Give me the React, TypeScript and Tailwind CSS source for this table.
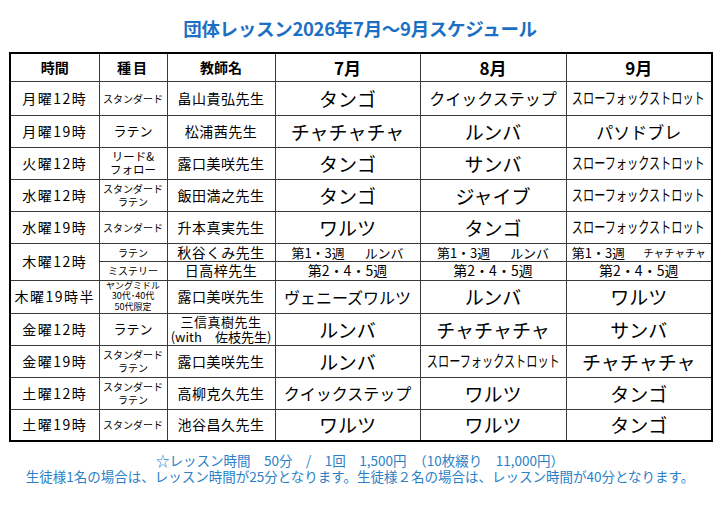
import React from "react";

const td = "border border-[#3a3a3a] p-0 text-center align-middle";

function C({ children, className = "" }: { children: React.ReactNode; className?: string }) {
  return <div className={`flex items-center justify-center whitespace-nowrap ${className}`}>{children}</div>;
}

function Big({ t }: { t: string }) {
  return <C className="text-[19px] leading-none">{t}</C>;
}
function Mid({ t }: { t: string }) {
  return <C className="text-[16px] leading-none">{t}</C>;
}
function Slow() {
  return (
    <C>
      <span className="inline-block shrink-0 text-[15.5px] leading-none scale-x-[0.72]">スローフォックストロット</span>
    </C>
  );
}
function Small({ lines }: { lines: string[] }) {
  return (
    <div className="flex flex-col items-center justify-center text-[10px] leading-[13px] whitespace-nowrap">
      {lines.map((l, i) => (
        <span key={i}>{l}</span>
      ))}
    </div>
  );
}

function Row({
  time,
  type,
  teacher,
  m,
  h = "h-[32px]",
}: {
  time: string;
  type: React.ReactNode;
  teacher: React.ReactNode;
  m: React.ReactNode[];
  h?: string;
}) {
  return (
    <tr className={h}>
      <td className={`${td} text-[14px] tracking-[1.5px] whitespace-nowrap`}>{time}</td>
      <td className={td}>{type}</td>
      <td className={`${td} text-[14px] tracking-[0.5px] whitespace-nowrap`}>{teacher}</td>
      {m.map((x, i) => (
        <td key={i} className={td}>
          {x}
        </td>
      ))}
    </tr>
  );
}

export default function App() {
  return (
    <div className="w-[720px] h-[506px] bg-white text-black font-['Noto_Sans_CJK_JP',sans-serif]">
      <div className="pt-[16px] pb-[12px] text-center text-[18.5px] leading-[24px] font-bold text-[#1c6fc2] tracking-[-0.3px]">
        団体レッスン2026年7月〜9月スケジュール
      </div>
      <table className="table-fixed border-collapse w-[702px] ml-[9px] border-2 border-black">
        <colgroup>
          <col className="w-[89px]" />
          <col className="w-[68px]" />
          <col className="w-[108px]" />
          <col className="w-[145px]" />
          <col className="w-[146px]" />
          <col className="w-[146px]" />
        </colgroup>
        <tbody>
          <tr className="h-[28px] font-bold">
            <td className={`${td} text-[14px]`}>時間</td>
            <td className={`${td} text-[14px] tracking-[2px]`}>種目</td>
            <td className={`${td} text-[14px]`}>教師名</td>
            <td className={`${td} text-[17px]`}>7月</td>
            <td className={`${td} text-[17px]`}>8月</td>
            <td className={`${td} text-[17px]`}>9月</td>
          </tr>
          <Row
            h="h-[34px]"
            time="月曜12時"
            type={<Small lines={["スタンダード"]} />}
            teacher="畠山貴弘先生"
            m={[<Big t="タンゴ" />, <Mid t="クイックステップ" />, <Slow />]}
          />
          <Row
            time="月曜19時"
            type={<C className="text-[13px]">ラテン</C>}
            teacher="松浦茜先生"
            m={[<Big t="チャチャチャ" />, <Big t="ルンバ" />, <C className="text-[17px] leading-none">パソドブレ</C>]}
          />
          <Row
            time="火曜12時"
            type={
              <div className="flex flex-col items-center text-[11.5px] leading-[13px]">
                <span>リード&amp;</span>
                <span>フォロー</span>
              </div>
            }
            teacher="露口美咲先生"
            m={[<Big t="タンゴ" />, <Big t="サンバ" />, <Slow />]}
          />
          <Row
            time="水曜12時"
            type={<Small lines={["スタンダード", "ラテン"]} />}
            teacher="飯田満之先生"
            m={[<Big t="タンゴ" />, <Big t="ジャイブ" />, <Slow />]}
          />
          <Row
            time="水曜19時"
            type={<Small lines={["スタンダード"]} />}
            teacher="升本真実先生"
            m={[<Big t="ワルツ" />, <Big t="タンゴ" />, <Slow />]}
          />
          <tr className="h-[18px]">
            <td rowSpan={2} className={`${td} text-[14px] tracking-[1.5px]`}>
              木曜12時
            </td>
            <td className={td}>
              <Small lines={["ラテン"]} />
            </td>
            <td className={`${td} text-[14px] leading-[17px] tracking-[0.5px]`}>秋谷くみ先生</td>
            <td className={`${td} text-[13px] leading-[17px]`}>
              <C>
                <span>第1・3週</span>
                <span className="ml-[20px]">ルンバ</span>
              </C>
            </td>
            <td className={`${td} text-[13px] leading-[17px]`}>
              <C>
                <span>第1・3週</span>
                <span className="ml-[20px]">ルンバ</span>
              </C>
            </td>
            <td className={`${td} text-[13px] leading-[17px]`}>
              <C>
                <span>第1・3週</span>
                <span className="ml-[18px] text-[10.5px]">チャチャチャ</span>
              </C>
            </td>
          </tr>
          <tr className="h-[19px]">
            <td className={td}>
              <Small lines={["ミステリー"]} />
            </td>
            <td className={`${td} text-[14px] leading-[17px] tracking-[0.5px]`}>日高梓先生</td>
            <td className={`${td} text-[14px] leading-[17px]`}>第2・4・5週</td>
            <td className={`${td} text-[14px] leading-[17px]`}>第2・4・5週</td>
            <td className={`${td} text-[14px] leading-[17px]`}>第2・4・5週</td>
          </tr>
          <Row
            h="h-[33px]"
            time="木曜19時半"
            type={
              <div className="flex flex-col items-center text-[9px] leading-[10.5px] whitespace-nowrap">
                <span>ヤングミドル</span>
                <span>30代･40代</span>
                <span>50代限定</span>
              </div>
            }
            teacher="露口美咲先生"
            m={[<Mid t="ヴェニーズワルツ" />, <Big t="ルンバ" />, <Big t="ワルツ" />]}
          />
          <Row
            time="金曜12時"
            type={<C className="text-[13px]">ラテン</C>}
            teacher={
              <div className="flex flex-col items-center text-[13px] leading-[15.5px] tracking-[0px] whitespace-nowrap">
                <span className="tracking-[0.5px]">三信真樹先生</span>
                <span>(with　佐枝先生)</span>
              </div>
            }
            m={[<Big t="ルンバ" />, <Big t="チャチャチャ" />, <Big t="サンバ" />]}
          />
          <Row
            time="金曜19時"
            type={<Small lines={["スタンダード", "ラテン"]} />}
            teacher="露口美咲先生"
            m={[<Big t="ルンバ" />, <Slow />, <Big t="チャチャチャ" />]}
          />
          <Row
            time="土曜12時"
            type={<Small lines={["スタンダード", "ラテン"]} />}
            teacher="高柳克久先生"
            m={[<Mid t="クイックステップ" />, <Big t="ワルツ" />, <Big t="タンゴ" />]}
          />
          <Row
            time="土曜19時"
            type={<Small lines={["スタンダード"]} />}
            teacher="池谷昌久先生"
            m={[<Big t="ワルツ" />, <Big t="ワルツ" />, <Big t="タンゴ" />]}
          />
        </tbody>
      </table>
      <div className="mt-[10px] text-center text-[13.5px] leading-[16px] text-[#2a7fc6]">
        <div>☆レッスン時間　50分　/　1回　1,500円　（10枚綴り　11,000円）</div>
        <div>
          生徒様1名の場合は、レッスン時間が25分となります。生徒様２名の場合は、レッスン時間が40分となります。
        </div>
      </div>
    </div>
  );
}
